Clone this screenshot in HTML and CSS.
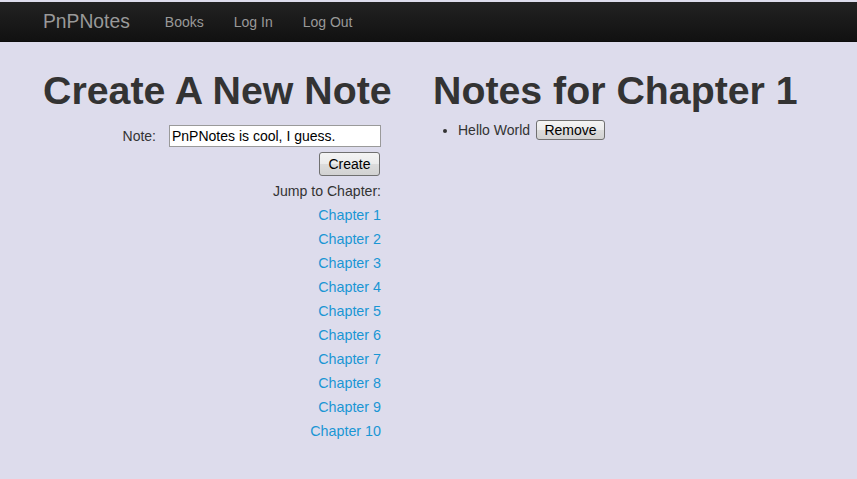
FILE: index.html
```html
<!DOCTYPE html>
<html>
<head>
<meta charset="utf-8">
<title>PnPNotes</title>
<link rel="stylesheet" href="styles.css">
</head>
<body>
<nav class="navbar">
  <a class="brand" href="#">PnPNotes</a>
  <ul class="nav">
    <li><a href="#">Books</a></li>
    <li><a href="#">Log In</a></li>
    <li><a href="#">Log Out</a></li>
  </ul>
</nav>
<main class="main">
  <section class="col-left">
    <h1>Create A New Note</h1>
    <form class="note-form">
      <div class="note-row">
        <label class="note-label" for="note">Note:</label>
        <input class="note-input" id="note" type="text" value="PnPNotes is cool, I guess.">
      </div>
      <div class="btn-row"><button class="btn btn-create" type="button">Create</button></div>
    </form>
    <div class="jump">Jump to Chapter:</div>
    <ul class="chapters">
      <li><a href="#">Chapter 1</a></li>
      <li><a href="#">Chapter 2</a></li>
      <li><a href="#">Chapter 3</a></li>
      <li><a href="#">Chapter 4</a></li>
      <li><a href="#">Chapter 5</a></li>
      <li><a href="#">Chapter 6</a></li>
      <li><a href="#">Chapter 7</a></li>
      <li><a href="#">Chapter 8</a></li>
      <li><a href="#">Chapter 9</a></li>
      <li><a href="#">Chapter 10</a></li>
    </ul>
  </section>
  <section class="col-right">
    <h1>Notes for Chapter 1</h1>
    <ul class="notes">
      <li>Hello World <button class="btn btn-remove" type="button">Remove</button></li>
    </ul>
  </section>
</main>
</body>
</html>
```
FILE: styles.css
```css
html, body {
  margin: 0;
  padding: 0;
}
body {
  background: #dddcec;
  font-family: "Liberation Sans", Arial, sans-serif;
  font-size: 14px;
  line-height: 20px;
  color: #333;
  padding-top: 2px;
  min-height: 477px;
}
.navbar {
  display: flex;
  align-items: center;
  height: 40px;
  box-sizing: border-box;
  padding-left: 43px;
  background: linear-gradient(#222222, #111111);
  border-bottom: 1px solid #0d0d0d;
}
.brand {
  font-size: 19.3px;
  line-height: 20px;
  color: #999;
  text-decoration: none;
  padding: 10px 20px 10px 0;
}
.nav {
  display: flex;
  list-style: none;
  margin: 0;
  padding: 0;
}
.nav a {
  display: block;
  padding: 10px 15px;
  color: #999;
  text-decoration: none;
  font-size: 14px;
  line-height: 20px;
}
.main {
  display: flex;
  gap: 52px;
  padding: 28px 0 0 43px;
}
h1 {
  margin: 0;
  font-size: 39.3px;
  line-height: 40px;
  font-weight: bold;
  color: #333;
  white-space: nowrap;
}
.col-left {
  width: 338px;
  flex: none;
  text-align: right;
}
.col-left h1 {
  text-align: left;
}
.note-form {
  margin: 15px 0 0;
}
.note-row {
  display: flex;
  justify-content: flex-end;
  align-items: center;
  gap: 13px;
}
.note-label {
  color: #333;
}
.note-input {
  width: 212px;
  height: 22px;
  box-sizing: border-box;
  margin: 0;
  padding: 1px 2px;
  border: 1px solid #9a9a9a;
  background: #fff;
  font-family: "Liberation Sans", Arial, sans-serif;
  font-size: 14px;
  color: #000;
  outline: none;
}
.btn-row {
  display: flex;
  justify-content: flex-end;
  margin-top: 5px;
  padding-right: 1px;
}
.btn {
  font-family: "Liberation Sans", Arial, sans-serif;
  font-size: 14px;
  color: #000;
  background: linear-gradient(#f4f4f4 0%, #ebebeb 50%, #dcdcdc 51%, #d2d2d2 100%);
  border: 1px solid #707070;
  border-radius: 3px;
  box-sizing: border-box;
  margin: 0;
}
.btn-create {
  height: 24px;
  width: 61px;
  padding: 0;
}
.jump {
  margin-top: 3px;
  line-height: 24px;
  font-size: 14.1px;
}
.chapters {
  list-style: none;
  margin: 0;
  padding: 0;
}
.chapters li {
  line-height: 24px;
  font-size: 14.3px;
}
.chapters a {
  color: #1a96d4;
  text-decoration: none;
}
.col-right {
  flex: none;
}
.notes {
  margin: 10px 0 0;
  padding-left: 25px;
}
.notes li {
  line-height: 20px;
}
.btn-remove {
  height: 20px;
  width: 69px;
  padding: 0;
  vertical-align: baseline;
  margin-left: 2px;
}
```
